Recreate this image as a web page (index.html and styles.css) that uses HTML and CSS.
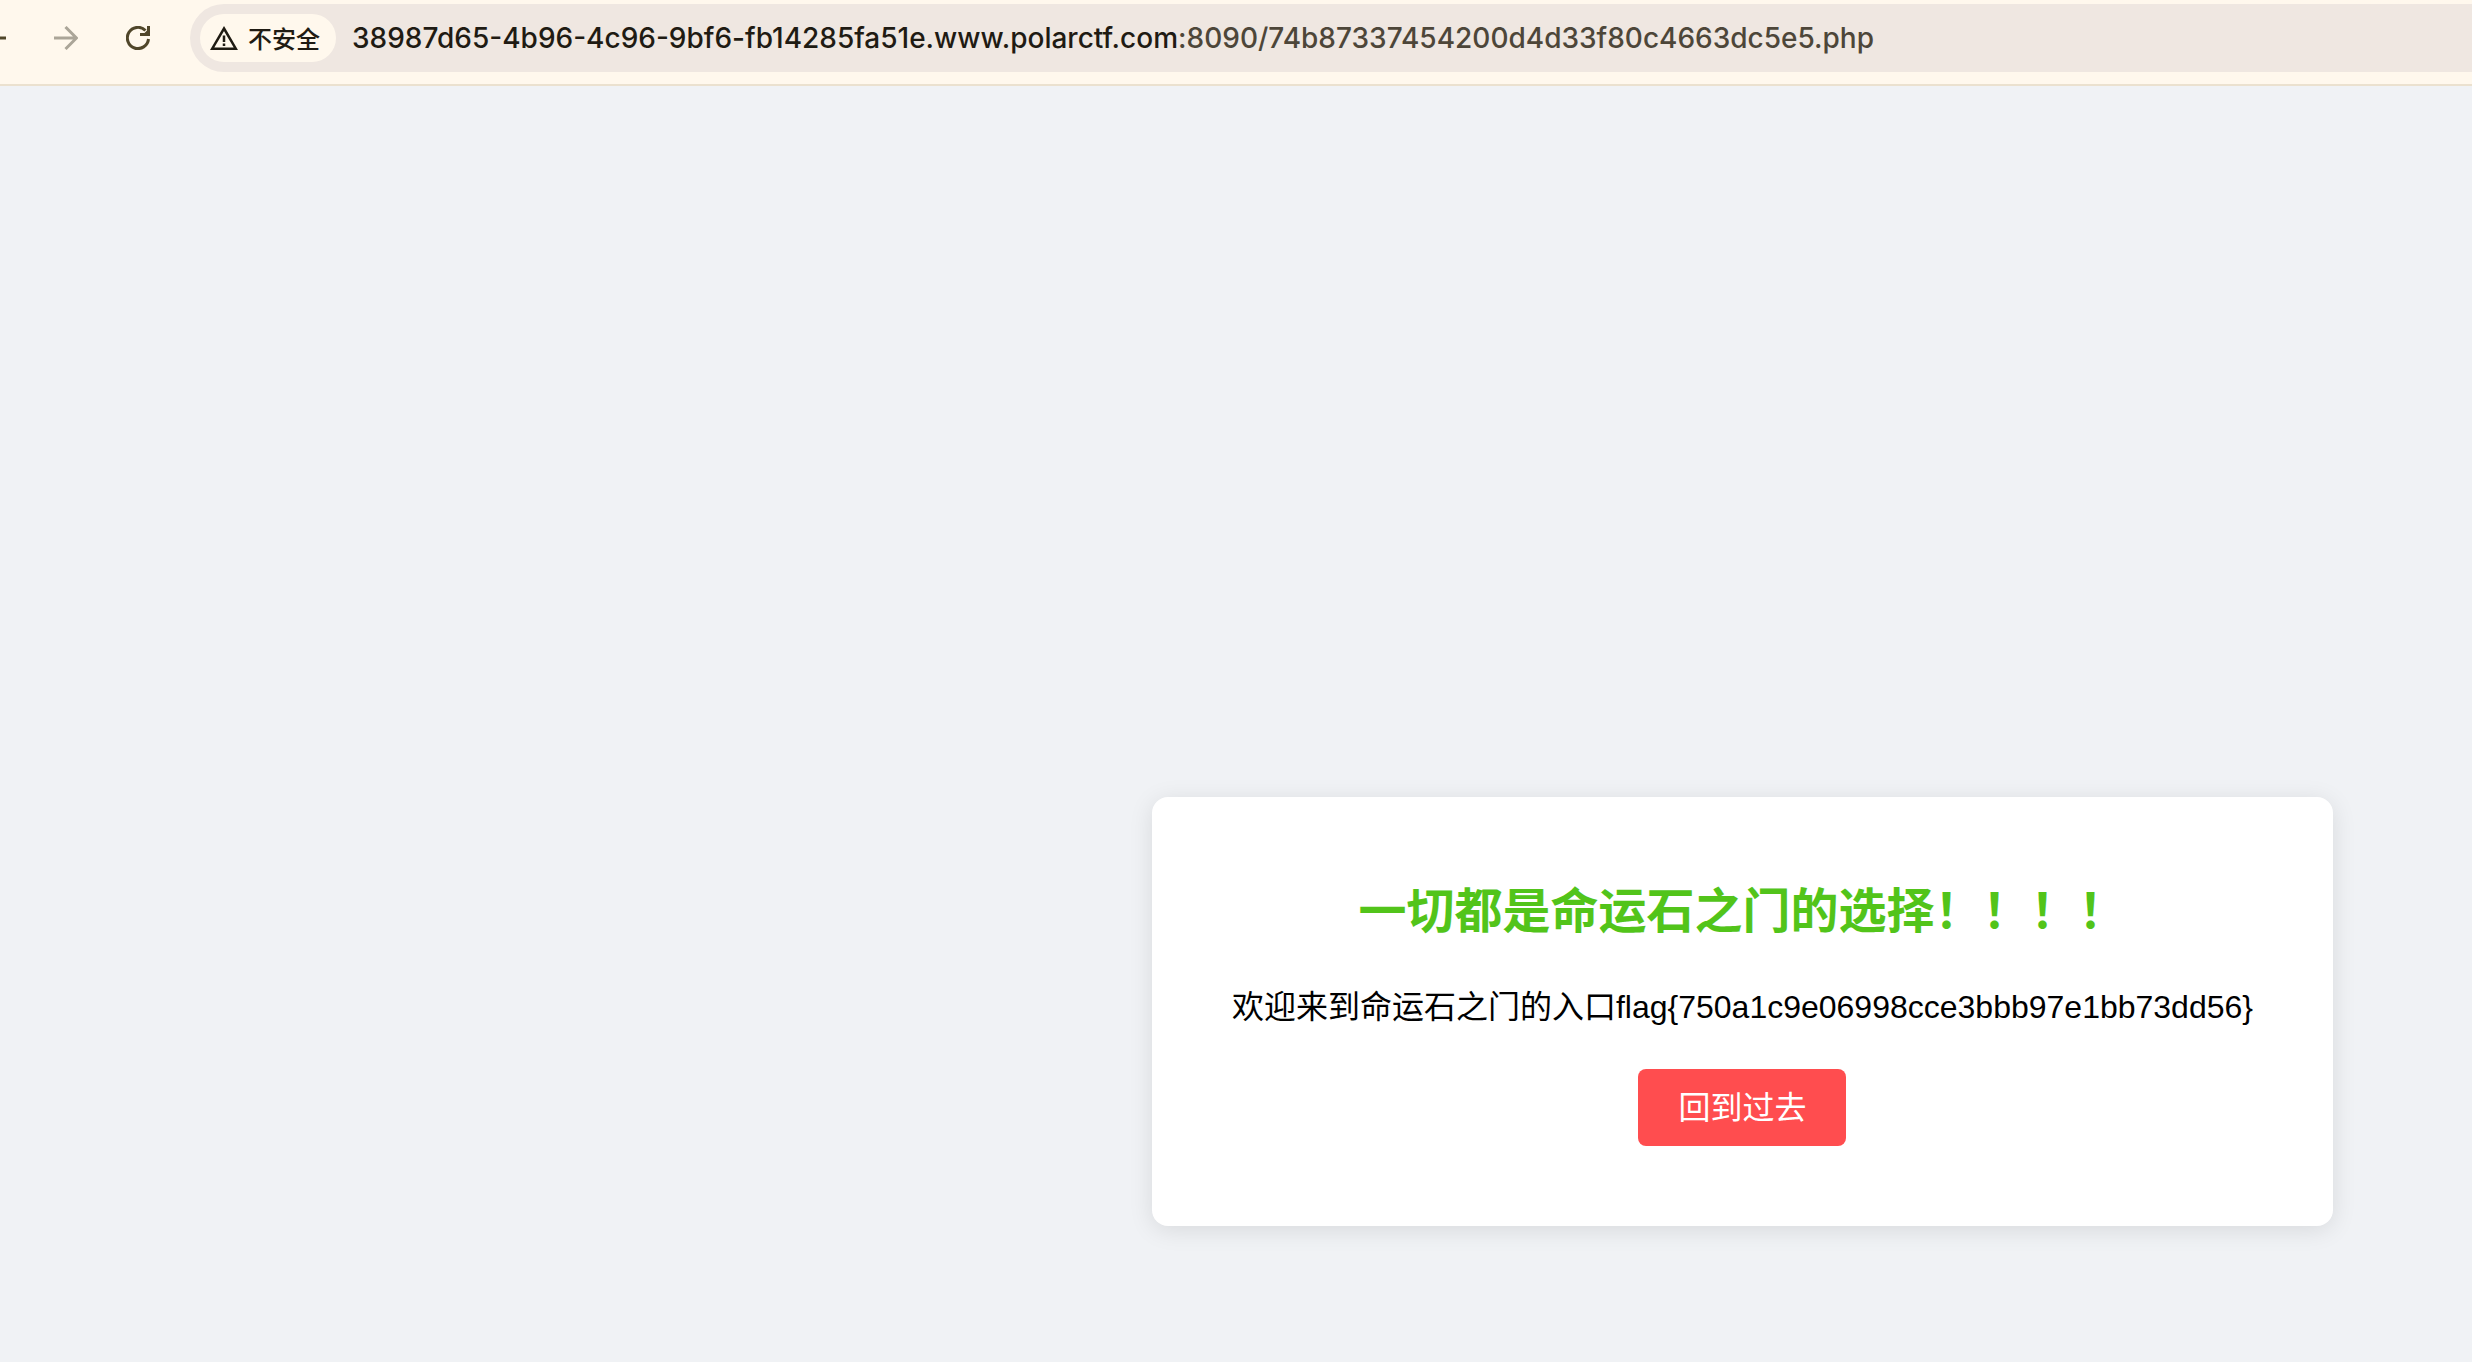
FILE: index.html
```html
<!DOCTYPE html>
<html lang="zh-CN">
<head>
    <meta charset="UTF-8">
    <meta name="viewport" content="width=device-width, initial-scale=1.0">
    <title>命运石之门</title>
    <link rel="stylesheet" href="styles.css">
</head>
<body>
    <header class="toolbar">
        <button class="nav-button" type="button" aria-label="后退">
            <svg viewBox="0 0 24 24"><path d="M24 12H2M12 1L1.500 12L12 23"/></svg>
        </button>
        <button class="nav-button" type="button" aria-label="前进" disabled>
            <svg viewBox="0 0 24 24"><path d="M0 12H22M11.500 1L22.500 12L11.500 23"/></svg>
        </button>
        <button class="nav-button" type="button" aria-label="重新加载">
            <svg viewBox="0 0 24 24">
                <path d="M22.500 13A10.600 10.600 0 1 1 19.500 4.500"/>
                <path d="M24 0V10H14V7H18.500L21 4.500V0Z" fill="currentColor" stroke="none"/>
            </svg>
        </button>
        <div class="address-bar">
            <button class="security-chip" type="button">
                <svg viewBox="0 0 28 24"><path d="M14 2.500L25.800 22.700H2.200Z"/><path d="M14 9.500V16M14 17.500V20"/></svg>
                <span>不安全</span>
            </button>
            <div class="url" role="textbox" contenteditable="true" spellcheck="false" aria-label="地址栏">38987d65-4b96-4c96-9bf6-fb14285fa51e.www.polarctf.com<span class="url-path">:8090/74b87337454200d4d33f80c4663dc5e5.php</span></div>
        </div>
    </header>
    <main>
        <div class="card">
            <h2>一切都是命运石之门的选择！！！！</h2>
            <p>欢迎来到命运石之门的入口flag{750a1c9e06998cce3bbb97e1bb73dd56}</p>
            <button class="back-button" type="button">回到过去</button>
        </div>
    </main>
</body>
</html>
```
FILE: styles.css
```css
* {
    box-sizing: border-box;
}
body {
    font-family: "Liberation Sans", "Noto Sans CJK SC", sans-serif;
    font-size: 32px;
    background-color: #f0f2f5;
    margin: 0;
    min-height: 100vh;
    display: flex;
    flex-direction: column;
    overflow: hidden;
}
button {
    border: none;
    font-family: inherit;
    cursor: pointer;
}
svg {
    display: block;
    fill: none;
    stroke: currentColor;
}
.toolbar {
    display: flex;
    align-items: center;
    margin-left: -42px;
    padding: 4px 0 12px;
    background-color: #fff8ed;
    border-bottom: 2px solid #ebe1cf;
    font-family: Inter, "Noto Sans CJK SC", sans-serif;
}
.nav-button {
    display: flex;
    justify-content: center;
    width: 72px;
    padding: 0;
    background: none;
    color: #50462a;
}
.nav-button svg {
    width: 24px;
    height: 24px;
    stroke-width: 3;
}
.nav-button:disabled {
    color: #aba598;
    cursor: default;
}
.address-bar {
    flex: 1;
    display: flex;
    align-items: center;
    gap: 16px;
    height: 68px;
    margin-left: 16px;
    padding-left: 10px;
    background-color: #efe7e1;
    border-radius: 34px 0 0 34px;
    color: #1f1b13;
}
.security-chip {
    display: flex;
    align-items: center;
    gap: 10px;
    height: 48px;
    padding: 0 16px 0 10px;
    background-color: #fff8ed;
    border-radius: 24px;
    color: inherit;
    font-family: "Noto Sans CJK SC", sans-serif;
    font-size: 24px;
    font-weight: 500;
    line-height: 32px;
    white-space: nowrap;
}
.security-chip svg {
    width: 28px;
    height: 24px;
    stroke-width: 2.500;
}
.url {
    flex: 1;
    font-size: 28px;
    font-weight: 500;
    white-space: nowrap;
    outline: none;
}
.url-path {
    color: #4d4639;
}
main {
    flex: 1;
    display: flex;
    justify-content: flex-end;
    align-items: flex-end;
    padding: 136px 139px;
}
.card {
    padding: 80px;
    background-color: white;
    border-radius: 16px;
    box-shadow: 0 4px 24px rgba(0, 0, 0, 0.1);
    text-align: center;
}
.card h2 {
    margin: 0 0 38px;
    color: #52c41a;
    font-size: 48px;
    line-height: 70px;
}
.card p {
    margin: 0 0 40px;
    line-height: 44px;
}
.back-button {
    display: block;
    margin: 0 auto;
    padding: 17px 40px 15px;
    background-color: #ff4d4f;
    border-radius: 8px;
    color: white;
    font-size: 32px;
    line-height: 45px;
}
.back-button:hover {
    background-color: #d9363e;
}
```
